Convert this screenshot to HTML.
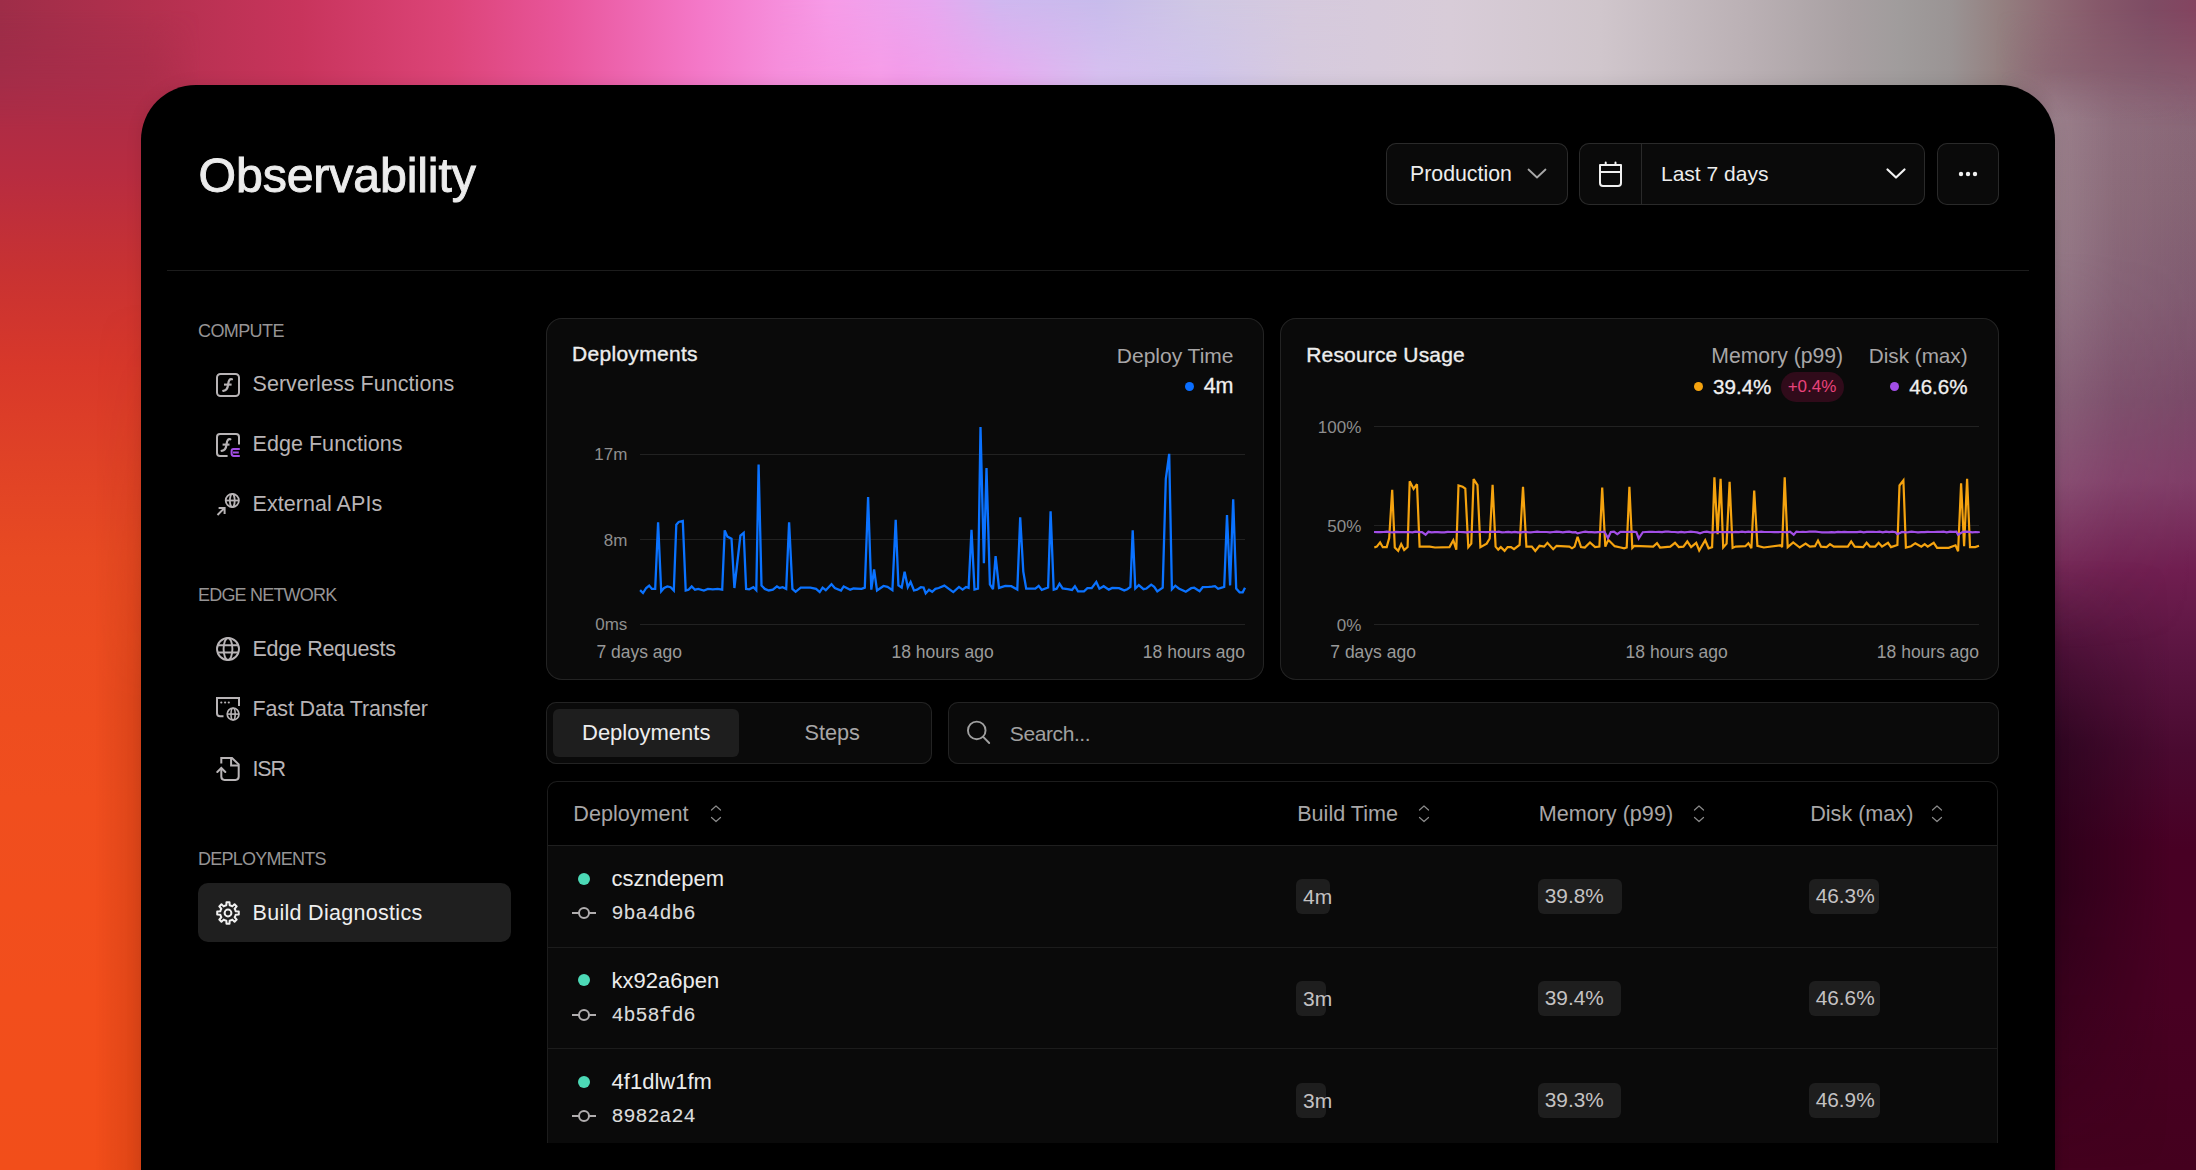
<!DOCTYPE html>
<html><head><meta charset="utf-8"><title>Observability</title>
<style>
html,body{margin:0;padding:0;}
body{width:2196px;height:1170px;overflow:hidden;position:relative;background:#000;font-family:'Liberation Sans', sans-serif;}
.b{position:absolute;}
.t{position:absolute;white-space:nowrap;line-height:1;}
</style></head><body>
<div class="b" style="left:0;top:0;width:2196px;height:220px;background:linear-gradient(90deg,#9e2d48 0px,#b3304e 150px,#c8345c 300px,#dc4478 450px,#e8559a 560px,#f478c8 700px,#f79ce8 830px,#e8a8f0 930px,#d0b8f0 1000px,#c8bcec 1100px,#d0c8e4 1200px,#d6cade 1300px,#d8ccd8 1450px,#d0c6cc 1600px,#bab0b4 1750px,#a8a0a2 1850px,#a09c9c 1900px,#9a9494 1950px,#948080 2000px,#8e6a74 2050px,#86586a 2100px,#7e4c64 2150px,#844460 2196px);"></div>
<div class="b" style="left:780px;top:0;width:570px;height:140px;background:linear-gradient(90deg,#f68edc 0px,#f79ce8 100px,#f49ae8 120px,#eba8f0 220px,#d8c0f0 320px,#d0c4ec 420px,#d6cade 520px,#d7cbdc 570px);mask-image:linear-gradient(180deg,transparent 0px,#000 85px);"></div>
<div class="b" style="left:0;top:0;width:200px;height:1170px;-webkit-mask-image:linear-gradient(90deg,#000 142px,transparent 200px);mask-image:linear-gradient(90deg,#000 142px,transparent 200px);"><div class="b" style="left:0;top:0;width:200px;height:1170px;background:linear-gradient(180deg,#9a2c48 0px,#a82c48 80px,#b82c40 176px,#c83232 271px,#d8382a 367px,#e04226 463px,#e84a22 558px,#ec4c20 640px,#f04e1e 800px,#f24e1c 1000px,#f24e1a 1170px);-webkit-mask-image:linear-gradient(180deg,transparent 10px,#000 130px);mask-image:linear-gradient(180deg,transparent 10px,#000 130px);"></div></div>
<div class="b" style="left:95px;top:300px;width:46px;height:870px;background:linear-gradient(90deg,rgba(110,20,0,0) 0px,rgba(110,20,0,0.16) 46px);mask-image:linear-gradient(180deg,transparent 0px,#000 400px);"></div>
<div class="b" style="left:1996px;top:0;width:200px;height:1170px;-webkit-mask-image:linear-gradient(90deg,transparent 0px,#000 66px);mask-image:linear-gradient(90deg,transparent 0px,#000 66px);"><div class="b" style="left:0;top:0;width:200px;height:1170px;background:linear-gradient(180deg,#8a6070 0px,#8a6878 100px,#866474 200px,#805a70 300px,#7a4a68 400px,#803e68 480px,#701e50 570px,#5a1440 660px,#4a0a30 750px,#480024 850px,#480022 1000px,#44001e 1170px);-webkit-mask-image:linear-gradient(180deg,transparent 10px,#000 130px);mask-image:linear-gradient(180deg,transparent 10px,#000 130px);"></div></div>
<div class="b" style="left:2000px;top:0;width:196px;height:800px;background:linear-gradient(90deg,rgba(180,165,170,0) 0px,rgba(180,165,170,0.40) 55px,rgba(180,165,170,0.12) 115px,rgba(180,165,170,0) 196px);-webkit-mask-image:linear-gradient(180deg,transparent 70px,#000 120px,#000 250px,transparent 650px);mask-image:linear-gradient(180deg,transparent 70px,#000 120px,#000 250px,transparent 650px);"></div>
<div class="b" style="left:2050px;top:560px;width:146px;height:610px;background:linear-gradient(90deg,rgba(10,0,12,0.45) 0px,rgba(10,0,12,0.25) 50px,rgba(10,0,12,0) 120px);mask-image:linear-gradient(180deg,transparent 0px,#000 180px,#000 330px,transparent 610px);"></div>
<div class="b" style="left:141px;top:85px;width:1914px;height:1200px;background:#000;border-radius:55px 55px 0 0;box-shadow:0 0 16px rgba(0,0,0,0.10);"></div>
<div class="t" style="left:198.5px;top:150.61px;font-size:48.3px;color:#ececec;font-weight:400;letter-spacing:-0.15px;font-family:'Liberation Sans', sans-serif;-webkit-text-stroke:0.9px #ececec;">Observability</div>
<div class="b" style="left:167px;top:270px;width:1862px;height:1px;background:#1c1c1c;border-radius:0;"></div>
<div class="b" style="left:1386px;top:143px;width:182px;height:62px;background:#0a0a0a;border-radius:10px;box-shadow:inset 0 0 0 1px #2a2a2a;"></div>
<div class="t" style="left:1410px;top:163.97px;font-size:21.3px;color:#ededed;font-weight:400;letter-spacing:0px;font-family:'Liberation Sans', sans-serif;">Production</div>
<svg class="b" style="left:1526px;top:166px" width="22" height="16" viewBox="0 0 22 16"><path d="M2.5 3.5 L11 11.5 L19.5 3.5" fill="none" stroke="#a8a8a8" stroke-width="1.8" stroke-linecap="round" stroke-linejoin="round"/></svg>
<div class="b" style="left:1579px;top:143px;width:346px;height:62px;background:#0a0a0a;border-radius:10px;box-shadow:inset 0 0 0 1px #2a2a2a;"></div>
<div class="b" style="left:1641px;top:143px;width:1px;height:62px;background:#2a2a2a;border-radius:0;"></div>
<svg class="b" style="left:1596px;top:160px" width="30" height="30" viewBox="0 0 30 30"><path d="M4 5 H25 V23 Q25 26 22 26 H7 Q4 26 4 23 Z" fill="none" stroke="#f0f0f0" stroke-width="2" stroke-linejoin="round"/><path d="M4 12 H25" stroke="#f0f0f0" stroke-width="2"/><path d="M9.7 2.5 V5 M19.5 2.5 V5" stroke="#f0f0f0" stroke-width="2" stroke-linecap="round"/></svg>
<div class="t" style="left:1661px;top:163.42px;font-size:21px;color:#ededed;font-weight:400;letter-spacing:0px;font-family:'Liberation Sans', sans-serif;">Last 7 days</div>
<svg class="b" style="left:1885px;top:166px" width="22" height="16" viewBox="0 0 22 16"><path d="M2.5 3.5 L11 11.5 L19.5 3.5" fill="none" stroke="#f2f2f2" stroke-width="2.2" stroke-linecap="round" stroke-linejoin="round"/></svg>
<div class="b" style="left:1937px;top:143px;width:62px;height:62px;background:#0a0a0a;border-radius:10px;box-shadow:inset 0 0 0 1px #2a2a2a;"></div>
<svg class="b" style="left:1954px;top:168px" width="28" height="12" viewBox="0 0 28 12"><circle cx="7" cy="6" r="2.2" fill="#f0f0f0"/><circle cx="14" cy="6" r="2.2" fill="#f0f0f0"/><circle cx="21" cy="6" r="2.2" fill="#f0f0f0"/></svg>
<div class="t" style="left:198px;top:322.06px;font-size:18px;color:#969495;font-weight:400;letter-spacing:-0.6px;font-family:'Liberation Sans', sans-serif;">COMPUTE</div>
<div class="t" style="left:252.5px;top:374.40px;font-size:21.5px;color:#b8b4b6;font-weight:400;letter-spacing:0.05px;font-family:'Liberation Sans', sans-serif;">Serverless Functions</div>
<div class="t" style="left:252.5px;top:434.40px;font-size:21.5px;color:#b8b4b6;font-weight:400;letter-spacing:0.05px;font-family:'Liberation Sans', sans-serif;">Edge Functions</div>
<div class="t" style="left:252.5px;top:494.40px;font-size:21.5px;color:#b8b4b6;font-weight:400;letter-spacing:0.05px;font-family:'Liberation Sans', sans-serif;">External APIs</div>
<div class="t" style="left:198px;top:586.16px;font-size:18px;color:#969495;font-weight:400;letter-spacing:-0.8px;font-family:'Liberation Sans', sans-serif;">EDGE NETWORK</div>
<div class="t" style="left:252.5px;top:638.80px;font-size:21.5px;color:#b8b4b6;font-weight:400;letter-spacing:-0.3px;font-family:'Liberation Sans', sans-serif;">Edge Requests</div>
<div class="t" style="left:252.5px;top:698.80px;font-size:21.5px;color:#b8b4b6;font-weight:400;letter-spacing:-0.15px;font-family:'Liberation Sans', sans-serif;">Fast Data Transfer</div>
<div class="t" style="left:252.5px;top:758.80px;font-size:21.5px;color:#b8b4b6;font-weight:400;letter-spacing:-1.2px;font-family:'Liberation Sans', sans-serif;">ISR</div>
<div class="t" style="left:198px;top:849.56px;font-size:18px;color:#969495;font-weight:400;letter-spacing:-0.75px;font-family:'Liberation Sans', sans-serif;">DEPLOYMENTS</div>
<div class="b" style="left:198px;top:883px;width:313px;height:59px;background:#1f1f1f;border-radius:10px;"></div>
<div class="t" style="left:252.5px;top:903.10px;font-size:21.5px;color:#efefef;font-weight:400;letter-spacing:0.3px;font-family:'Liberation Sans', sans-serif;">Build Diagnostics</div>
<svg class="b" style="left:216px;top:373px" width="24" height="24" viewBox="0 0 24 24" fill="none" stroke="#b8b4b6" stroke-width="2"><rect x="1" y="1" width="22" height="22" rx="3.5"/><path d="M16 6.3 C13.6 5.6 12.6 7.4 12.2 11.2 C11.7 16 10.4 17.9 7.2 17.8" stroke-width="2.2" stroke-linecap="round"/><path d="M8 11.6 H15.6" stroke-width="2.1"/></svg>
<svg class="b" style="left:216px;top:433px" width="24" height="24" viewBox="0 0 24 24" fill="none" stroke="#b8b4b6" stroke-width="2"><path d="M11.6 23 H4 Q1 23 1 20 V4 Q1 1 4 1 H20 Q23 1 23 4 V11.6"/><path d="M14.4 6.3 C12 5.6 11 7.4 10.6 11.2 C10.1 16 8.8 17.9 5.6 17.8" stroke-width="2.2" stroke-linecap="round"/><path d="M6.6 11.6 H13.5" stroke-width="2.1"/><path d="M23.8 16 H17.5 Q15.6 16 15.6 18 V20.5 Q15.6 22.9 17.8 22.9 H23.8 M17 19.5 H22.8" stroke="#a24ee6" stroke-width="2"/></svg>
<svg class="b" style="left:216px;top:493px" width="24" height="24" viewBox="0 0 24 24" fill="none" stroke="#b8b4b6" stroke-width="1.8"><circle cx="16.3" cy="7.5" r="6.6"/><ellipse cx="16.3" cy="7.5" rx="2.4" ry="6.6"/><path d="M9.7 7.5 H22.9"/><path d="M1.5 22 L8.6 14.9 M2.6 14.9 H8.6 V20.9" stroke-width="2"/></svg>
<svg class="b" style="left:216px;top:637px" width="24" height="24" viewBox="0 0 24 24" fill="none" stroke="#b8b4b6" stroke-width="1.9"><circle cx="12" cy="12" r="11"/><ellipse cx="12" cy="12" rx="4.4" ry="11"/><path d="M1.6 8.3 H22.4 M1.6 15.5 H22.4"/></svg>
<svg class="b" style="left:216px;top:697px" width="24" height="24" viewBox="0 0 24 24" fill="none" stroke="#b8b4b6" stroke-width="2"><path d="M7.5 19.3 H4 Q1 19.3 1 16.3 V1 H23 V8.9"/><circle cx="5.3" cy="5.5" r="1.1" fill="#b8b4b6" stroke="none"/><circle cx="9.1" cy="5.5" r="1.1" fill="#b8b4b6" stroke="none"/><circle cx="12.8" cy="5.5" r="1.1" fill="#b8b4b6" stroke="none"/><circle cx="17.1" cy="17.1" r="5.9" stroke-width="1.7"/><ellipse cx="17.1" cy="17.1" rx="2.1" ry="5.9" stroke-width="1.6"/><path d="M11.2 17.1 H23" stroke-width="1.6"/></svg>
<svg class="b" style="left:216px;top:757px" width="24" height="24" viewBox="0 0 24 24" fill="none" stroke="#b8b4b6" stroke-width="2"><path d="M5.3 6.5 V1 H16 L22.7 7.4 V19.5 Q22.7 22.9 19.5 22.9 H8.5 Q5.3 22.9 5.3 19.5 V11.5"/><path d="M15.1 1 V8.5 H22.7"/><path d="M1.3 15 L5.3 11 L9.3 15" stroke-linecap="round"/></svg>
<svg class="b" style="left:214px;top:899px" width="28" height="28" viewBox="0 0 28 28" fill="none" stroke="#f0f0f0" stroke-width="2" stroke-linejoin="round"><path d="M10.98 6.70 L12.36 6.27 L12.48 3.21 L15.52 3.21 L15.64 6.27 L17.02 6.70 L18.30 7.37 L20.56 5.29 L22.71 7.44 L20.63 9.70 L21.30 10.98 L21.73 12.36 L24.79 12.48 L24.79 15.52 L21.73 15.64 L21.30 17.02 L20.63 18.30 L22.71 20.56 L20.56 22.71 L18.30 20.63 L17.02 21.30 L15.64 21.73 L15.52 24.79 L12.48 24.79 L12.36 21.73 L10.98 21.30 L9.70 20.63 L7.44 22.71 L5.29 20.56 L7.37 18.30 L6.70 17.02 L6.27 15.64 L3.21 15.52 L3.21 12.48 L6.27 12.36 L6.70 10.98 L7.37 9.70 L5.29 7.44 L7.44 5.29 L9.70 7.37 Z"/><circle cx="14" cy="14" r="3.4"/></svg>
<div class="b" style="left:546px;top:318px;width:718px;height:362px;background:#0a0a0a;border-radius:16px;box-shadow:inset 0 0 0 1px #232323;"></div>
<div class="b" style="left:1280px;top:318px;width:719px;height:362px;background:#0a0a0a;border-radius:16px;box-shadow:inset 0 0 0 1px #232323;"></div>
<div class="t" style="left:572px;top:343.42px;font-size:21px;color:#ededed;font-weight:400;letter-spacing:0.3px;font-family:'Liberation Sans', sans-serif;-webkit-text-stroke:0.35px #ededed;">Deployments</div>
<div class="t" style="right:962.5px;top:345.22px;font-size:21px;color:#a8a6a7;font-weight:400;letter-spacing:0px;font-family:'Liberation Sans', sans-serif;">Deploy Time</div>
<div class="b" style="left:1185px;top:382px;width:9.4px;height:9.4px;border-radius:50%;background:#0a6eff"></div>
<div class="t" style="right:962.5px;top:375.80px;font-size:21.5px;color:#f0f0f0;font-weight:400;letter-spacing:0px;font-family:'Liberation Sans', sans-serif;-webkit-text-stroke:0.3px #f0f0f0;">4m</div>
<div class="t" style="right:1568.7px;top:446.31px;font-size:17px;color:#8e8e8e;font-weight:400;letter-spacing:0px;font-family:'Liberation Sans', sans-serif;">17m</div>
<div class="b" style="left:640px;top:454px;width:605px;height:1px;background:#222222;border-radius:0;"></div>
<div class="t" style="right:1568.7px;top:531.61px;font-size:17px;color:#8e8e8e;font-weight:400;letter-spacing:0px;font-family:'Liberation Sans', sans-serif;">8m</div>
<div class="b" style="left:640px;top:539px;width:605px;height:1px;background:#222222;border-radius:0;"></div>
<div class="t" style="right:1568.7px;top:616.31px;font-size:17px;color:#8e8e8e;font-weight:400;letter-spacing:0px;font-family:'Liberation Sans', sans-serif;">0ms</div>
<div class="b" style="left:640px;top:624px;width:605px;height:1px;background:#222222;border-radius:0;"></div>
<div class="t" style="left:596.4px;top:644.19px;font-size:17.5px;color:#9a9a9a;font-weight:400;letter-spacing:0px;font-family:'Liberation Sans', sans-serif;">7 days ago</div>
<div class="t" style="left:891.5px;top:644.19px;font-size:17.5px;color:#9a9a9a;font-weight:400;letter-spacing:0px;font-family:'Liberation Sans', sans-serif;">18 hours ago</div>
<div class="t" style="right:951px;top:644.19px;font-size:17.5px;color:#9a9a9a;font-weight:400;letter-spacing:0px;font-family:'Liberation Sans', sans-serif;">18 hours ago</div>
<svg class="b" style="left:0;top:0" width="2196" height="1170"><path d="M640.1 590.2 L643.0 593.0 L646.2 588.0 L649.2 585.6 L651.9 588.9 L655.2 588.9 L658.1 522.3 L661.2 591.3 L664.1 588.0 L667.3 586.4 L670.6 587.2 L673.8 590.5 L676.3 524.7 L678.7 522.0 L682.8 521.0 L685.7 590.5 L688.5 589.7 L691.7 586.4 L695.0 589.7 L698.2 588.9 L703.9 590.5 L707.9 588.9 L712.8 589.3 L717.7 588.9 L722.2 589.7 L724.7 530.4 L727.4 536.6 L731.5 538.8 L734.4 588.0 L740.4 535.6 L743.7 532.8 L746.1 588.9 L749.3 589.3 L753.4 587.2 L756.3 590.2 L758.6 464.6 L761.5 585.6 L764.8 588.9 L768.8 590.5 L772.9 589.7 L776.9 586.4 L779.4 588.0 L782.6 587.2 L786.2 588.9 L789.1 522.3 L792.4 588.9 L795.6 591.8 L800.7 587.6 L810.4 587.7 L816.1 588.9 L819.7 592.1 L822.6 587.6 L825.8 590.2 L831.5 584.3 L834.8 588.0 L841.0 590.5 L843.7 586.4 L850.2 589.7 L853.5 588.5 L861.6 588.9 L864.8 587.6 L868.1 497.1 L871.3 589.7 L874.1 569.4 L877.0 590.5 L883.5 586.0 L887.5 586.9 L892.4 590.2 L895.7 519.9 L898.4 585.3 L901.7 587.6 L904.6 571.8 L907.8 587.2 L910.6 582.0 L914.0 590.5 L917.1 589.7 L920.8 587.2 L923.6 587.6 L925.7 593.4 L929.0 589.7 L932.2 591.8 L935.4 588.9 L938.7 588.0 L944.4 585.6 L953.3 592.1 L959.0 586.9 L962.6 589.6 L966.0 587.0 L968.6 587.9 L971.5 529.7 L974.5 589.6 L978.0 588.7 L980.5 427.1 L983.9 563.1 L986.5 468.1 L989.9 584.4 L993.0 589.2 L995.6 556.2 L999.0 587.9 L1005.3 585.8 L1011.3 586.2 L1017.3 589.6 L1020.2 517.4 L1023.3 571.6 L1026.2 588.7 L1035.3 588.7 L1038.7 585.8 L1041.8 589.9 L1048.1 587.5 L1050.6 511.4 L1053.7 589.6 L1056.6 588.7 L1059.5 583.6 L1062.6 588.4 L1067.7 589.2 L1072.0 589.9 L1074.9 586.2 L1078.0 591.3 L1084.0 591.3 L1087.4 588.2 L1091.7 588.2 L1096.3 581.9 L1099.4 588.7 L1103.7 586.2 L1108.8 589.6 L1112.2 587.9 L1119.0 588.2 L1124.2 590.4 L1127.3 589.2 L1130.4 586.9 L1132.7 530.3 L1135.3 588.5 L1138.8 585.1 L1143.5 589.2 L1146.5 588.5 L1151.2 584.6 L1154.2 586.9 L1157.3 591.5 L1162.7 587.7 L1165.8 479.2 L1169.2 453.8 L1171.9 589.2 L1175.3 585.7 L1178.8 588.5 L1185.8 591.8 L1191.2 588.2 L1194.2 587.7 L1199.6 591.2 L1202.7 587.2 L1208.8 586.9 L1211.9 586.6 L1215.0 586.2 L1218.1 588.8 L1224.2 586.9 L1227.0 515.1 L1230.1 585.4 L1233.2 499.2 L1236.2 588.5 L1239.6 592.3 L1242.7 592.3 L1245.0 587.7" fill="none" stroke="#0a72ff" stroke-width="2.3" stroke-linejoin="miter" stroke-miterlimit="3"/></svg>
<div class="t" style="left:1306.3px;top:343.62px;font-size:21px;color:#ededed;font-weight:400;letter-spacing:0.15px;font-family:'Liberation Sans', sans-serif;-webkit-text-stroke:0.35px #ededed;">Resource Usage</div>
<div class="t" style="right:352.9000000000001px;top:345.35px;font-size:21.2px;color:#a8a6a7;font-weight:400;letter-spacing:0px;font-family:'Liberation Sans', sans-serif;">Memory (p99)</div>
<div class="t" style="right:228.4000000000001px;top:345.78px;font-size:20.7px;color:#a8a6a7;font-weight:400;letter-spacing:0px;font-family:'Liberation Sans', sans-serif;">Disk (max)</div>
<div class="b" style="left:1694px;top:382px;width:9.4px;height:9.4px;border-radius:50%;background:#f5a30f"></div>
<div class="t" style="left:1713px;top:376.56px;font-size:20.6px;color:#f0f0f0;font-weight:400;letter-spacing:0px;font-family:'Liberation Sans', sans-serif;-webkit-text-stroke:0.3px #f0f0f0;">39.4%</div>
<div class="b" style="left:1781px;top:372px;width:63px;height:30px;background:#300b1a;border-radius:15px;"></div>
<div class="t" style="left:1787.7px;top:378.31px;font-size:17px;color:#e8437c;font-weight:400;letter-spacing:0px;font-family:'Liberation Sans', sans-serif;">+0.4%</div>
<div class="b" style="left:1890px;top:382px;width:9.4px;height:9.4px;border-radius:50%;background:#a24ee6"></div>
<div class="t" style="right:228.4000000000001px;top:376.56px;font-size:20.6px;color:#f0f0f0;font-weight:400;letter-spacing:0px;font-family:'Liberation Sans', sans-serif;-webkit-text-stroke:0.3px #f0f0f0;">46.6%</div>
<div class="t" style="right:834.7px;top:418.61px;font-size:17px;color:#8e8e8e;font-weight:400;letter-spacing:0px;font-family:'Liberation Sans', sans-serif;">100%</div>
<div class="b" style="left:1374px;top:426px;width:605px;height:1px;background:#222222;border-radius:0;"></div>
<div class="t" style="right:834.7px;top:517.51px;font-size:17px;color:#8e8e8e;font-weight:400;letter-spacing:0px;font-family:'Liberation Sans', sans-serif;">50%</div>
<div class="b" style="left:1374px;top:525px;width:605px;height:1px;background:#222222;border-radius:0;"></div>
<div class="t" style="right:834.7px;top:616.51px;font-size:17px;color:#8e8e8e;font-weight:400;letter-spacing:0px;font-family:'Liberation Sans', sans-serif;">0%</div>
<div class="b" style="left:1374px;top:624px;width:605px;height:1px;background:#222222;border-radius:0;"></div>
<div class="t" style="left:1330.3px;top:644.19px;font-size:17.5px;color:#9a9a9a;font-weight:400;letter-spacing:0px;font-family:'Liberation Sans', sans-serif;">7 days ago</div>
<div class="t" style="left:1625.6px;top:644.19px;font-size:17.5px;color:#9a9a9a;font-weight:400;letter-spacing:0px;font-family:'Liberation Sans', sans-serif;">18 hours ago</div>
<div class="t" style="right:217px;top:644.19px;font-size:17.5px;color:#9a9a9a;font-weight:400;letter-spacing:0px;font-family:'Liberation Sans', sans-serif;">18 hours ago</div>
<svg class="b" style="left:0;top:0" width="2196" height="1170"><path d="M1374.3 547.5 L1376.8 546.6 L1380.1 542.4 L1382.8 547.2 L1386.7 547.1 L1389.2 538.1 L1392.2 489.8 L1394.8 547.5 L1398.2 550.9 L1401.2 544.1 L1404.2 550.0 L1407.6 547.1 L1409.7 481.2 L1413.6 488.9 L1417.0 484.2 L1419.6 546.6 L1429.8 546.6 L1435.0 547.5 L1449.5 547.1 L1453.3 540.2 L1456.3 549.6 L1458.5 485.5 L1462.7 486.8 L1465.3 488.5 L1468.3 547.1 L1471.3 543.6 L1473.6 479.1 L1477.5 485.1 L1480.4 547.1 L1486.7 543.6 L1489.7 538.5 L1492.6 484.7 L1495.6 546.6 L1498.2 549.6 L1500.8 547.1 L1504.6 550.9 L1507.6 547.1 L1511.0 547.1 L1514.0 549.2 L1519.6 544.9 L1523.0 486.8 L1526.4 546.6 L1531.8 546.6 L1535.3 550.9 L1539.5 545.8 L1544.2 546.6 L1547.4 542.8 L1553.2 549.2 L1556.6 545.8 L1569.4 546.6 L1572.0 548.3 L1574.6 546.6 L1577.6 536.8 L1581.0 547.1 L1584.8 547.5 L1590.0 542.4 L1595.1 547.1 L1599.4 546.6 L1602.2 487.6 L1605.3 546.6 L1608.3 539.8 L1614.7 546.2 L1620.7 547.5 L1624.1 548.3 L1626.7 547.5 L1629.4 486.8 L1632.3 547.9 L1634.4 545.8 L1653.2 546.6 L1657.0 543.2 L1660.0 547.5 L1670.3 546.6 L1675.0 542.8 L1678.8 547.1 L1683.4 546.6 L1687.3 541.5 L1691.1 547.1 L1696.2 542.8 L1699.2 550.5 L1705.2 540.2 L1708.6 548.3 L1712.1 547.1 L1714.4 477.4 L1717.6 534.2 L1720.6 478.7 L1723.2 547.5 L1726.6 543.6 L1729.6 481.7 L1732.6 547.9 L1735.6 546.6 L1745.4 546.2 L1748.4 543.2 L1751.4 548.3 L1754.2 490.6 L1757.4 545.8 L1763.8 547.5 L1780.9 545.3 L1782.1 547.1 L1784.7 477.4 L1787.7 547.1 L1793.2 542.4 L1799.7 547.5 L1805.6 543.6 L1809.9 546.6 L1815.0 546.2 L1818.0 540.6 L1821.0 546.6 L1826.6 547.1 L1830.0 544.1 L1833.8 546.6 L1847.8 546.6 L1851.2 541.5 L1854.7 546.6 L1863.2 547.1 L1866.6 542.8 L1870.0 546.6 L1875.2 546.6 L1878.6 542.8 L1882.0 546.6 L1888.0 542.8 L1891.0 547.1 L1897.4 545.0 L1899.5 485.5 L1903.4 480.4 L1905.9 547.5 L1911.1 546.2 L1915.3 543.2 L1921.3 546.6 L1924.7 544.1 L1927.7 546.6 L1933.7 542.8 L1937.1 547.9 L1948.7 547.9 L1955.5 545.3 L1958.1 551.3 L1961.1 483.4 L1964.1 546.2 L1967.1 478.7 L1970.0 547.1 L1975.2 547.1 L1979.0 545.8" fill="none" stroke="#f5a30f" stroke-width="2.2" stroke-linejoin="miter" stroke-miterlimit="3"/><path d="M1374.0 532.0 L1377.2 532.2 L1380.4 532.2 L1383.6 532.0 L1386.8 531.6 L1390.0 532.2 L1393.2 532.4 L1396.4 531.8 L1399.6 532.2 L1402.8 532.0 L1406.0 532.2 L1409.2 532.0 L1412.4 532.4 L1415.6 531.6 L1418.8 532.2 L1422.0 532.0 L1425.6 534.7 L1428.4 531.8 L1431.6 532.4 L1434.8 532.2 L1438.0 532.2 L1441.2 532.4 L1444.4 532.4 L1447.6 531.8 L1450.8 532.0 L1454.0 532.0 L1457.2 531.8 L1460.4 532.0 L1463.6 532.2 L1466.8 532.4 L1470.0 531.8 L1473.2 532.0 L1476.4 531.8 L1479.6 532.0 L1482.8 532.0 L1486.0 532.2 L1489.2 532.0 L1492.4 531.6 L1495.6 532.0 L1498.8 531.6 L1502.0 532.4 L1505.2 532.2 L1508.4 531.8 L1511.6 532.4 L1514.8 531.8 L1518.0 532.4 L1521.2 532.4 L1524.4 531.8 L1527.6 532.2 L1530.8 532.4 L1534.0 532.0 L1537.2 531.6 L1540.4 532.0 L1543.6 532.0 L1546.8 532.0 L1550.0 532.4 L1553.2 532.0 L1556.4 531.6 L1559.6 531.8 L1562.8 532.4 L1566.0 531.8 L1569.2 531.6 L1572.4 532.4 L1575.6 532.2 L1577.6 533.4 L1582.0 532.2 L1585.2 531.6 L1588.4 532.2 L1591.6 532.2 L1594.8 532.4 L1598.0 532.2 L1601.2 532.0 L1604.4 531.6 L1607.9 538.1 L1610.8 532.0 L1614.0 531.6 L1617.3 534.2 L1620.4 531.8 L1623.6 531.8 L1626.8 532.0 L1630.0 531.8 L1633.2 531.6 L1636.4 532.2 L1638.7 538.5 L1642.8 532.2 L1646.0 532.0 L1649.2 531.8 L1652.4 531.8 L1655.6 532.0 L1658.8 531.8 L1662.0 532.2 L1665.2 531.6 L1668.4 531.6 L1671.6 532.0 L1674.8 532.0 L1678.0 532.4 L1681.2 531.8 L1684.4 532.4 L1687.6 532.0 L1690.8 531.6 L1694.0 532.0 L1697.2 532.4 L1700.0 533.4 L1703.6 532.0 L1706.8 531.6 L1710.0 532.4 L1713.2 532.4 L1716.4 532.0 L1719.6 532.0 L1722.8 532.2 L1726.0 532.2 L1729.2 532.0 L1732.4 532.4 L1735.6 531.8 L1738.8 532.2 L1742.0 531.6 L1745.2 532.2 L1748.4 531.6 L1751.6 532.2 L1754.8 532.0 L1758.0 532.0 L1761.2 531.6 L1764.4 532.0 L1767.6 532.0 L1770.8 532.0 L1774.0 532.2 L1777.2 532.2 L1780.4 532.0 L1783.6 532.0 L1786.8 532.4 L1790.0 531.6 L1793.7 534.7 L1796.4 531.6 L1799.6 532.0 L1802.8 531.8 L1806.0 532.0 L1809.2 531.6 L1812.4 531.6 L1815.6 531.6 L1818.8 532.0 L1822.0 532.4 L1825.2 532.4 L1828.4 532.4 L1831.6 532.2 L1834.8 532.4 L1838.0 531.8 L1841.2 532.2 L1844.4 531.8 L1847.6 532.2 L1850.8 532.0 L1854.0 532.2 L1857.2 532.2 L1860.4 531.6 L1863.6 532.4 L1866.8 531.8 L1870.0 531.8 L1873.2 531.8 L1876.4 532.0 L1879.6 531.6 L1882.8 532.4 L1886.0 531.6 L1889.2 532.2 L1892.4 531.6 L1895.6 532.2 L1897.4 534.2 L1902.0 532.0 L1905.2 532.4 L1908.4 532.2 L1911.6 531.6 L1914.8 532.0 L1918.0 532.4 L1921.2 532.2 L1924.4 532.2 L1927.6 531.8 L1930.8 532.0 L1934.0 532.0 L1937.2 531.8 L1940.4 531.8 L1943.6 531.6 L1946.8 532.4 L1950.0 531.6 L1953.2 531.8 L1956.4 531.6 L1958.1 534.7 L1962.8 531.8 L1966.0 531.6 L1969.2 531.8 L1972.4 532.4 L1975.6 532.0 L1978.8 532.2 L1979.0 533.0" fill="none" stroke="#a24ee6" stroke-width="2.2"/></svg>
<div class="b" style="left:546px;top:702px;width:386px;height:62px;background:#0a0a0a;border-radius:10px;box-shadow:inset 0 0 0 1px #232323;"></div>
<div class="b" style="left:553px;top:709px;width:186px;height:48px;background:#1e1e1e;border-radius:6px;"></div>
<div class="t" style="left:582px;top:721.88px;font-size:22px;color:#ededed;font-weight:400;letter-spacing:0px;font-family:'Liberation Sans', sans-serif;">Deployments</div>
<div class="t" style="left:804.5px;top:722.13px;font-size:21.7px;color:#a8a6a7;font-weight:400;letter-spacing:0px;font-family:'Liberation Sans', sans-serif;">Steps</div>
<div class="b" style="left:948px;top:702px;width:1051px;height:62px;background:#0a0a0a;border-radius:10px;box-shadow:inset 0 0 0 1px #232323;"></div>
<svg class="b" style="left:960px;top:713px" width="40" height="40" viewBox="0 0 40 40" fill="none" stroke="#a0a0a0" stroke-width="1.9"><circle cx="16.75" cy="17.4" r="8.8"/><path d="M23.2 23.8 L29.2 30" stroke-linecap="round"/></svg>
<div class="t" style="left:1009.8px;top:723.22px;font-size:21px;color:#a0a0a0;font-weight:400;letter-spacing:-0.4px;font-family:'Liberation Sans', sans-serif;">Search...</div>
<div class="b" style="left:547px;top:781px;width:1451px;height:362px;border-radius:10px 10px 0 0;box-shadow:inset 0 0 0 1px #1c1c1c;background:#000;overflow:hidden"></div>
<div class="b" style="left:548px;top:846px;width:1449px;height:297px;background:#0a0a0a;border-radius:0;"></div>
<div class="b" style="left:548px;top:845px;width:1449px;height:1px;background:#1f1f1f;border-radius:0;"></div>
<div class="b" style="left:548px;top:947px;width:1449px;height:1px;background:#1c1c1c;border-radius:0;"></div>
<div class="b" style="left:548px;top:1048px;width:1449px;height:1px;background:#1c1c1c;border-radius:0;"></div>
<div class="t" style="left:573.3px;top:802.82px;font-size:21.6px;color:#a8a6a7;font-weight:400;letter-spacing:0px;font-family:'Liberation Sans', sans-serif;">Deployment</div>
<svg class="b" style="left:709.5px;top:805px" width="12" height="18" viewBox="0 0 12 18" fill="none" stroke="#8a8a8a" stroke-width="1.2" stroke-linecap="round" stroke-linejoin="round"><path d="M1.5 5 L6 1 L10.5 5"/><path d="M1.5 12.5 L6 16.5 L10.5 12.5"/></svg>
<div class="t" style="left:1297.2px;top:802.82px;font-size:21.6px;color:#a8a6a7;font-weight:400;letter-spacing:0px;font-family:'Liberation Sans', sans-serif;">Build Time</div>
<svg class="b" style="left:1417.5px;top:805px" width="12" height="18" viewBox="0 0 12 18" fill="none" stroke="#8a8a8a" stroke-width="1.2" stroke-linecap="round" stroke-linejoin="round"><path d="M1.5 5 L6 1 L10.5 5"/><path d="M1.5 12.5 L6 16.5 L10.5 12.5"/></svg>
<div class="t" style="left:1538.7px;top:802.82px;font-size:21.6px;color:#a8a6a7;font-weight:400;letter-spacing:0px;font-family:'Liberation Sans', sans-serif;">Memory (p99)</div>
<svg class="b" style="left:1692.5px;top:805px" width="12" height="18" viewBox="0 0 12 18" fill="none" stroke="#8a8a8a" stroke-width="1.2" stroke-linecap="round" stroke-linejoin="round"><path d="M1.5 5 L6 1 L10.5 5"/><path d="M1.5 12.5 L6 16.5 L10.5 12.5"/></svg>
<div class="t" style="left:1810.2px;top:802.82px;font-size:21.6px;color:#a8a6a7;font-weight:400;letter-spacing:0px;font-family:'Liberation Sans', sans-serif;">Disk (max)</div>
<svg class="b" style="left:1931.3px;top:805px" width="12" height="18" viewBox="0 0 12 18" fill="none" stroke="#8a8a8a" stroke-width="1.2" stroke-linecap="round" stroke-linejoin="round"><path d="M1.5 5 L6 1 L10.5 5"/><path d="M1.5 12.5 L6 16.5 L10.5 12.5"/></svg>
<div class="b" style="left:578px;top:872.6px;width:12px;height:12px;border-radius:50%;background:#4cd9b6"></div>
<div class="t" style="left:611.6px;top:867.78px;font-size:22px;color:#ececec;font-weight:400;letter-spacing:0px;font-family:'Liberation Sans', sans-serif;">cszndepem</div>
<svg class="b" style="left:571px;top:904.7px" width="26" height="16" viewBox="0 0 26 16" fill="none" stroke="#b0adae" stroke-width="2"><circle cx="13" cy="8" r="5"/><path d="M1 8 H8 M18 8 H25"/></svg>
<div class="t" style="left:611.6px;top:903.77px;font-size:20px;color:#dcdcdc;font-weight:400;letter-spacing:0px;font-family:'Liberation Mono', monospace;-webkit-text-stroke:0.12px #dcdcdc;">9ba4db6</div>
<div class="b" style="left:1296px;top:879px;width:34px;height:35px;background:#1e1e1e;border-radius:6px;"></div>
<div class="t" style="left:1303px;top:886.02px;font-size:21px;color:#c4c2c3;font-weight:400;letter-spacing:0px;font-family:'Liberation Sans', sans-serif;">4m</div>
<div class="b" style="left:1538px;top:879px;width:84px;height:35px;background:#1e1e1e;border-radius:6px;"></div>
<div class="t" style="left:1544.8px;top:886.19px;font-size:20.8px;color:#c4c2c3;font-weight:400;letter-spacing:0px;font-family:'Liberation Sans', sans-serif;">39.8%</div>
<div class="b" style="left:1809px;top:879px;width:70px;height:35px;background:#1e1e1e;border-radius:6px;"></div>
<div class="t" style="left:1815.7px;top:886.19px;font-size:20.8px;color:#c4c2c3;font-weight:400;letter-spacing:0px;font-family:'Liberation Sans', sans-serif;">46.3%</div>
<div class="b" style="left:578px;top:974.4px;width:12px;height:12px;border-radius:50%;background:#4cd9b6"></div>
<div class="t" style="left:611.6px;top:969.58px;font-size:22px;color:#ececec;font-weight:400;letter-spacing:0px;font-family:'Liberation Sans', sans-serif;">kx92a6pen</div>
<svg class="b" style="left:571px;top:1006.5px" width="26" height="16" viewBox="0 0 26 16" fill="none" stroke="#b0adae" stroke-width="2"><circle cx="13" cy="8" r="5"/><path d="M1 8 H8 M18 8 H25"/></svg>
<div class="t" style="left:611.6px;top:1005.57px;font-size:20px;color:#dcdcdc;font-weight:400;letter-spacing:0px;font-family:'Liberation Mono', monospace;-webkit-text-stroke:0.12px #dcdcdc;">4b58fd6</div>
<div class="b" style="left:1296px;top:981px;width:30px;height:35px;background:#1e1e1e;border-radius:6px;"></div>
<div class="t" style="left:1303px;top:987.82px;font-size:21px;color:#c4c2c3;font-weight:400;letter-spacing:0px;font-family:'Liberation Sans', sans-serif;">3m</div>
<div class="b" style="left:1538px;top:981px;width:83px;height:35px;background:#1e1e1e;border-radius:6px;"></div>
<div class="t" style="left:1544.8px;top:987.99px;font-size:20.8px;color:#c4c2c3;font-weight:400;letter-spacing:0px;font-family:'Liberation Sans', sans-serif;">39.4%</div>
<div class="b" style="left:1809px;top:981px;width:71px;height:35px;background:#1e1e1e;border-radius:6px;"></div>
<div class="t" style="left:1815.7px;top:987.99px;font-size:20.8px;color:#c4c2c3;font-weight:400;letter-spacing:0px;font-family:'Liberation Sans', sans-serif;">46.6%</div>
<div class="b" style="left:578px;top:1076.2px;width:12px;height:12px;border-radius:50%;background:#4cd9b6"></div>
<div class="t" style="left:611.6px;top:1071.38px;font-size:22px;color:#ececec;font-weight:400;letter-spacing:0px;font-family:'Liberation Sans', sans-serif;">4f1dlw1fm</div>
<svg class="b" style="left:571px;top:1108.3px" width="26" height="16" viewBox="0 0 26 16" fill="none" stroke="#b0adae" stroke-width="2"><circle cx="13" cy="8" r="5"/><path d="M1 8 H8 M18 8 H25"/></svg>
<div class="t" style="left:611.6px;top:1107.37px;font-size:20px;color:#dcdcdc;font-weight:400;letter-spacing:0px;font-family:'Liberation Mono', monospace;-webkit-text-stroke:0.12px #dcdcdc;">8982a24</div>
<div class="b" style="left:1296px;top:1083px;width:30px;height:35px;background:#1e1e1e;border-radius:6px;"></div>
<div class="t" style="left:1303px;top:1089.62px;font-size:21px;color:#c4c2c3;font-weight:400;letter-spacing:0px;font-family:'Liberation Sans', sans-serif;">3m</div>
<div class="b" style="left:1538px;top:1083px;width:83px;height:35px;background:#1e1e1e;border-radius:6px;"></div>
<div class="t" style="left:1544.8px;top:1089.79px;font-size:20.8px;color:#c4c2c3;font-weight:400;letter-spacing:0px;font-family:'Liberation Sans', sans-serif;">39.3%</div>
<div class="b" style="left:1809px;top:1083px;width:71px;height:35px;background:#1e1e1e;border-radius:6px;"></div>
<div class="t" style="left:1815.7px;top:1089.79px;font-size:20.8px;color:#c4c2c3;font-weight:400;letter-spacing:0px;font-family:'Liberation Sans', sans-serif;">46.9%</div>
</body></html>
